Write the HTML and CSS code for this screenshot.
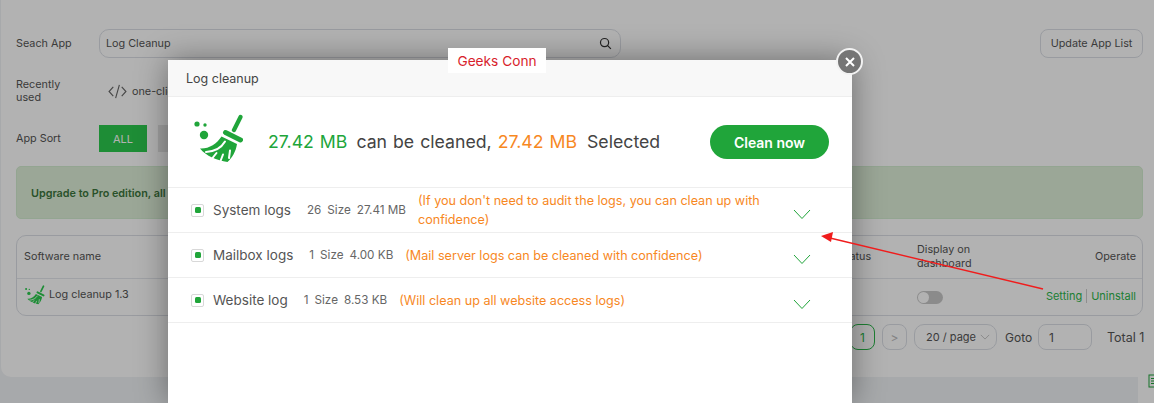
FILE: index.html
```html
<!DOCTYPE html>
<html lang="en">
<head>
<meta charset="utf-8">
<title>Log cleanup</title>
<link rel="stylesheet" href="styles.css">
</head>
<body>
<svg class="defs" width="0" height="0" aria-hidden="true">
  <symbol id="broom" viewBox="0 0 50 50">
    <path d="M47.500 3 41 16" fill="none" stroke="currentColor" stroke-width="4.200" stroke-linecap="round"/>
    <path d="M32.500 18.500 47.500 26" fill="none" stroke="currentColor" stroke-width="5" stroke-linecap="round"/>
    <path d="M28.500 22.500 44 30C43 37 39.500 43.500 34.500 48C24 46.500 13 42 7 34.500C16 35 23.500 30 28.500 22.500Z" fill="currentColor"/>
    <path d="M13 38C21.500 37.500 28.500 33.500 32 27.500M19.500 44 23.500 39M27.500 47 30 40.500M36 44 37 36.500" fill="none" stroke="#fff" stroke-width="2" stroke-linecap="round"/>
    <circle cx="4" cy="10" r="2.600" fill="currentColor"/>
    <circle cx="12" cy="11" r="1.700" fill="currentColor"/>
    <circle cx="11" cy="21" r="4.200" fill="currentColor"/>
  </symbol>
</svg>

<main class="page">
  <section class="card">
    <div class="search-row">
      <span class="label">Seach App</span>
      <div class="search-box">
        <span>Log Cleanup</span>
        <svg class="search-icon" viewBox="0 0 14 14" aria-hidden="true"><circle cx="6" cy="6" r="4.400"/><path d="M9.300 9.300 12.800 12.800"/></svg>
      </div>
      <button class="update-btn">Update App List</button>
    </div>
    <div class="recent-row">
      <span class="label recent-label">Recently used</span>
      <svg class="code-icon" viewBox="0 0 20 16" aria-hidden="true"><path d="M5.500 3 1 8l4.500 5M14.500 3 19 8l-4.500 5M12 1 8 15"/></svg>
      <span class="recent-name">one-click</span>
    </div>
    <div class="sort-row">
      <span class="label">App Sort</span>
      <button class="tab tab-on">ALL</button>
      <button class="tab tab-off">Free</button>
    </div>
    <div class="alert">Upgrade to Pro edition, all plugins are free to use.</div>
    <div class="table">
      <div class="table-head">
        <span class="col-name">Software name</span>
        <span class="col-status">Status</span>
        <span class="col-dash">Display on dashboard</span>
        <span class="col-op">Operate</span>
      </div>
      <div class="table-row">
        <span class="col-name app-name"><svg class="app-icon"><use href="#broom"/></svg>Log cleanup 1.3</span>
        <span class="col-status">-</span>
        <span class="col-dash"><span class="toggle"></span></span>
        <span class="col-op links"><a>Setting</a><a class="link-second">Uninstall</a></span>
      </div>
    </div>
    <div class="pager">
      <span class="page-btn page-on">1</span>
      <span class="page-btn page-next">&gt;</span>
      <span class="page-size">20 / page<svg class="size-arrow" viewBox="0 0 12 7" aria-hidden="true"><path d="M1 1l5 5 5-5"/></svg></span>
      <span class="goto">Goto</span>
      <span class="goto-input">1</span>
      <span class="total">Total 1</span>
    </div>
  </section>
</main>

<aside class="side-widget">
  <svg viewBox="0 0 12 14" aria-hidden="true"><rect x="1" y="1" width="10" height="12"/><path d="M3 4.500h6M3 7h6M3 9.500h6"/></svg>
</aside>

<div class="overlay"></div>

<div class="modal">
  <header class="modal-head">Log cleanup</header>
  <div class="summary">
    <svg class="broom-big"><use href="#broom"/></svg>
    <p class="summary-text"><span class="green">27.42 MB</span> can be cleaned, <span class="orange">27.42 MB</span> Selected</p>
    <button class="clean-btn">Clean now</button>
  </div>
  <div class="log-row">
    <span class="check"></span>
    <span class="log-name">System logs</span>
    <span class="log-size"><span>26</span><span>Size</span><span>27.41 MB</span></span>
    <span class="log-note">(If you don't need to audit the logs, you can clean up with confidence)</span>
    <svg class="chev" viewBox="0 0 18 11" aria-hidden="true"><path d="M1 1l8 8.500L17 1"/></svg>
  </div>
  <div class="log-row">
    <span class="check"></span>
    <span class="log-name">Mailbox logs</span>
    <span class="log-size"><span>1</span><span>Size</span><span>4.00 KB</span></span>
    <span class="log-note">(Mail server logs can be cleaned with confidence)</span>
    <svg class="chev" viewBox="0 0 18 11" aria-hidden="true"><path d="M1 1l8 8.500L17 1"/></svg>
  </div>
  <div class="log-row">
    <span class="check"></span>
    <span class="log-name">Website log</span>
    <span class="log-size"><span>1</span><span>Size</span><span>8.53 KB</span></span>
    <span class="log-note">(Will clean up all website access logs)</span>
    <svg class="chev" viewBox="0 0 18 11" aria-hidden="true"><path d="M1 1l8 8.500L17 1"/></svg>
  </div>
</div>

<button class="close-btn" aria-label="Close"><svg viewBox="0 0 12 12" aria-hidden="true"><path d="M2 2l8 8M10 2l-8 8"/></svg></button>
<div class="watermark">Geeks Conn</div>
<svg class="arrow" viewBox="0 0 1154 403" aria-hidden="true"><path class="arrow-line" d="M1043 289 830 238"/><path class="arrow-head" d="M821 236 833 232 831 242Z"/></svg>
</body>
</html>
```

FILE: styles.css
```css
* { box-sizing: border-box; }
html, body { margin: 0; height: 100%; }
body {
  width: 1154px;
  height: 403px;
  overflow: hidden;
  background: #f0f2f5;
  font-family: Inter, "Liberation Sans", sans-serif;
  font-size: 12px;
  color: #555;
  position: relative;
}
.defs { position: absolute; }
.page { padding: 0 0 0 1px; }
.card {
  height: 377px;
  background: #fff;
  border-radius: 0 0 0 10px;
  padding: 29px 11px 0 15px;
}
.label { width: 83px; flex: none; font-size: 10.800px; }
button { font-family: inherit; }

.search-row { display: flex; align-items: center; height: 29px; }
.search-box {
  width: 522px;
  height: 29px;
  border: 1px solid #dcdfe6;
  border-radius: 10px;
  display: flex;
  align-items: center;
  justify-content: space-between;
  padding: 0 8px 0 6px;
  font-size: 10.800px;
}
.search-icon { width: 13px; height: 13px; fill: none; stroke: #333; stroke-width: 1.300; }
.update-btn {
  margin-left: auto;
  width: 103px;
  height: 29px;
  background: #fff;
  border: 1px solid #dcdfe6;
  border-radius: 8px;
  color: #555;
  font-size: 10.800px;
  padding: 0;
}

.recent-row { display: flex; align-items: center; margin-top: 20px; height: 26px; }
.recent-label { line-height: 13px; padding-right: 20px; }
.code-icon { width: 19px; height: 15px; margin-left: 9px; fill: none; stroke: #666; stroke-width: 1.200; }
.recent-name { margin-left: 5px; font-size: 10.800px; }

.sort-row { display: flex; align-items: center; margin-top: 21px; height: 27px; }
.tab { width: 48px; height: 27px; border: 0; font-size: 11px; padding: 0; margin-right: 11px; }
.tab-on { background: #2ccb4e; color: #fff; }
.tab-off { background: #e6e6e6; color: #666; }

.alert {
  margin-top: 14px;
  height: 53px;
  border: 1px solid #d3ecd0;
  border-radius: 5px;
  background: #dff0d8;
  color: #3c763d;
  font-size: 10.800px;
  font-weight: 600;
  padding: 20px 0 0 14px;
}

.table {
  margin-top: 16px;
  height: 81px;
  border: 1px solid #dcdfe6;
  border-radius: 10px;
  font-size: 10.800px;
}
.table-head, .table-row {
  display: grid;
  grid-template-columns: 815px 78px 1fr 100px;
  align-items: center;
  padding: 0 6px 0 7px;
}
.table-head { height: 43px; border-bottom: 1px solid #e4e7ed; line-height: 14px; }
.table-row { height: 36px; }
.col-dash { max-width: 70px; }
.col-op { text-align: right; }
.app-name { display: flex; align-items: center; gap: 4px; white-space: nowrap; margin-top: -5px; }
.app-icon { width: 21px; height: 20px; color: #2ccb4e; }
.toggle {
  display: block;
  position: relative;
  width: 26px;
  height: 13px;
  border-radius: 7px;
  background: #c8c8c8;
}
.toggle::before {
  content: "";
  position: absolute;
  left: 1px;
  top: 1px;
  width: 11px;
  height: 11px;
  border-radius: 50%;
  background: #fff;
}
.links { font-size: 11px; color: #2bb64a; white-space: nowrap; margin-top: -3px; }
.link-second { border-left: 1px solid #ccc; margin-left: 4px; padding-left: 4px; }

.pager { display: flex; align-items: center; justify-content: flex-end; margin-top: 8px; height: 26px; font-size: 12px; }
.page-btn {
  display: flex;
  align-items: center;
  justify-content: center;
  width: 25px;
  height: 26px;
  border: 1px solid #dcdfe6;
  border-radius: 8px;
  margin-right: 7px;
}
.page-on { border-color: #2bb64a; color: #2bb64a; }
.page-next { color: #bbb; }
.page-size {
  display: flex;
  align-items: center;
  gap: 4px;
  width: 83px;
  height: 26px;
  border: 1px solid #dcdfe6;
  border-radius: 10px;
  padding-left: 11px;
  font-size: 11px;
}
.size-arrow { width: 10px; height: 6px; fill: none; stroke: #bbb; }
.goto { margin-left: 8px; width: 33px; }
.goto-input {
  width: 54px;
  height: 26px;
  border: 1px solid #dcdfe6;
  border-radius: 8px;
  padding: 5px 0 0 10px;
}
.total { margin-left: 15px; width: 36px; white-space: nowrap; font-size: 12.500px; }

.side-widget {
  position: absolute;
  left: 1138px;
  top: 360px;
  width: 16px;
  height: 43px;
  background: #fff;
  padding: 14px 0 0 10px;
}
.side-widget svg { width: 12px; height: 14px; fill: none; stroke: #20a53a; display: block; overflow: visible; }

.overlay { position: absolute; inset: 0; background: rgba(0, 0, 0, .3); }

.modal {
  position: absolute;
  left: 168px;
  top: 60px;
  width: 684px;
  height: 343px;
  background: #fff;
  box-shadow: 0 0 30px rgba(0, 0, 0, .4);
  color: #555;
}
.modal-head {
  height: 37px;
  background: #f8f8f8;
  border-bottom: 1px solid #eee;
  padding: 11px 0 0 18px;
  font-size: 12.500px;
  color: #444;
}
.summary {
  height: 91px;
  border-bottom: 1px solid #eee;
  display: flex;
  align-items: center;
  padding: 0 23px 0 25px;
}
.broom-big { width: 50px; height: 50px; color: #20a53a; flex: none; margin-top: -6px; }
.summary-text { margin: -2px 0 0 25px; font-size: 17.700px; color: #444; white-space: pre; word-spacing: 1px; }
.green { color: #20a53a; margin-right: 3px; }
.orange { color: #f7881f; margin-right: 4px; }
.clean-btn {
  margin-left: auto;
  width: 119px;
  height: 34px;
  border: 0;
  border-radius: 17px;
  background: #20a53a;
  color: #fff;
  font-size: 14px;
  font-weight: 600;
  padding: 0;
}
.log-row {
  height: 45px;
  border-bottom: 1px solid #eee;
  display: flex;
  align-items: center;
  padding-left: 23px;
  position: relative;
}
.check {
  width: 13px;
  height: 13px;
  border: 1px solid #d8d8d8;
  border-radius: 2px;
  flex: none;
  position: relative;
}
.check::before {
  content: "";
  position: absolute;
  left: 2.500px;
  top: 2.500px;
  width: 6px;
  height: 6px;
  border-radius: 1.500px;
  background: #20a53a;
}
.log-name { margin-left: 9px; font-size: 13.500px; white-space: nowrap; color: #555; }
.log-size { display: flex; gap: 6px; margin-left: 16px; font-size: 11.700px; color: #666; white-space: nowrap; }
.log-note { margin-left: 12px; width: 350px; font-size: 12.600px; line-height: 19px; color: #f7881f; }
.chev { position: absolute; left: 625px; top: 21px; width: 18px; height: 11px; fill: none; stroke: #20a53a; stroke-width: 1; }

.close-btn {
  position: absolute;
  left: 836px;
  top: 48px;
  width: 27px;
  height: 27px;
  border: 2.500px solid #f2f2f2;
  border-radius: 50%;
  background: #757575;
  padding: 4px;
}
.close-btn svg { display: block; width: 12px; height: 12px; margin: 0 auto; fill: none; stroke: #fff; stroke-width: 2; }
.watermark {
  position: absolute;
  left: 448px;
  top: 48px;
  width: 98px;
  height: 25px;
  background: #fff;
  color: #d81e2c;
  font-size: 13.700px;
  text-align: center;
  line-height: 26px;
}
.arrow { position: absolute; inset: 0; width: 1154px; height: 403px; pointer-events: none; }
.arrow-line { stroke: #f01c1c; stroke-width: 1.400; fill: none; }
.arrow-head { fill: #f01c1c; }
```
